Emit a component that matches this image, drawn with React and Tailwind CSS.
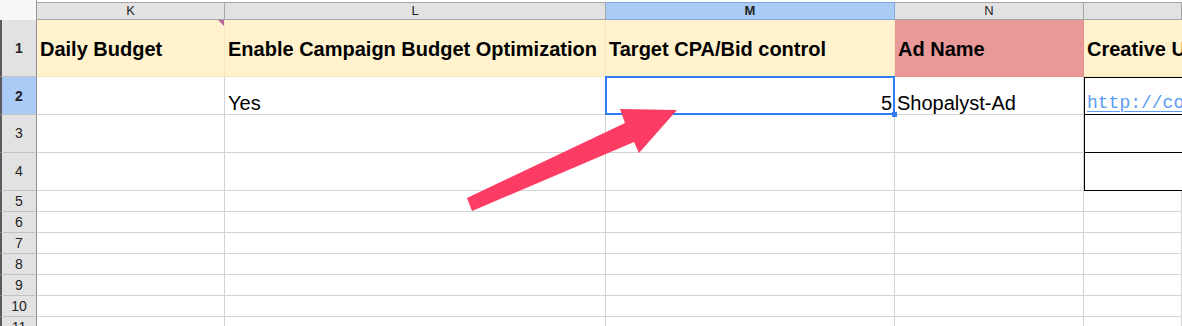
const grid = 'grid grid-cols-[37px_188px_381px_289px_189px_98px]'
const line = 'border-r border-b border-[#d3d3d3]'

const colHeads = [
  { label: 'K' },
  { label: 'L' },
  { label: 'M', active: true },
  { label: 'N' },
  { label: '' },
]

function RowHead({ n, h, active }) {
  return (
    <div
      className={`${h} flex items-center justify-center border-r border-r-[#8f8f8f] border-b border-b-[#c2c2c2] border-l-2 border-l-[#5a5a5a] text-[14px] text-[#222] ${
        active ? 'bg-[#a9cbf6] font-bold' : 'bg-[#e2e2e2]'
      }`}
    >
      {n}
    </div>
  )
}

function ColumnHeaders() {
  return (
    <div className={`${grid} h-[20px]`}>
      <div className="border-r border-[#9a9a9a] bg-[#f7f7f7]" />
      {colHeads.map((c, i) => (
        <div key={i} className="pt-[2px]">
          <div
            className={`flex h-[18px] items-center justify-center border-t border-b border-r text-[13px] text-[#222] ${
              c.active ? 'border-[#7fa9e0] bg-[#a9cbf6] font-bold' : 'border-[#a6a6a6] bg-[#e2e2e2]'
            }`}
          >
            {c.label}
          </div>
        </div>
      ))}
    </div>
  )
}

function EmptyRow({ n }) {
  return (
    <div className={`${grid} h-[21px]`}>
      <RowHead n={n} h="h-[21px]" />
      <div className={line} />
      <div className={line} />
      <div className={line} />
      <div className={line} />
      <div className={line} />
    </div>
  )
}

export default function App() {
  return (
    <div className="relative h-[326px] w-[1182px] overflow-hidden bg-white font-['Liberation_Sans',Arial,sans-serif] text-black">
      <ColumnHeaders />

      {/* row 1: headers */}
      <div className={`${grid} h-[57px] text-[20px] font-bold leading-[22px]`}>
        <RowHead n="1" h="h-[57px]" />
        <div className="relative flex items-center border-r border-b border-[#f3e6c1] bg-[#fff2cc] px-[3px] pt-[1px] whitespace-nowrap">
          Daily Budget
          <span className="absolute right-0 top-0 h-0 w-0 border-l-[6px] border-t-[6px] border-l-transparent border-t-[#b9649e]" />
        </div>
        <div className="flex items-center overflow-hidden border-r border-b border-[#f3e6c1] bg-[#fff2cc] px-[3px] pt-[1px] whitespace-nowrap">
          Enable Campaign Budget Optimization
        </div>
        <div className="flex items-center overflow-hidden border-r border-b border-[#f3e6c1] bg-[#fff2cc] px-[3px] pt-[1px] whitespace-nowrap">
          Target CPA/Bid control
        </div>
        <div className="flex items-center overflow-hidden border-r border-b border-[#e08e8e] bg-[#ea9999] px-[3px] pt-[1px] whitespace-nowrap">
          Ad Name
        </div>
        <div className="flex items-center overflow-hidden border-b border-[#f3e6c1] bg-[#fff2cc] px-[3px] pt-[1px] whitespace-nowrap">
          Creative URL
        </div>
      </div>

      {/* row 2 */}
      <div className={`${grid} h-[38px] text-[20px] leading-[22px]`}>
        <RowHead n="2" h="h-[38px]" active />
        <div className={line} />
        <div className={`${line} flex items-end px-[3px]`}>Yes</div>
        <div className={`${line} relative flex items-end justify-end pr-[2px]`}>
          5
          <div className="absolute -left-px -top-px -right-px -bottom-px border-2 border-[#2f7cf4]" />
          <div className="absolute -bottom-[3px] -right-[3px] h-[5px] w-[5px] bg-[#2f7cf4]" />
        </div>
        <div className={`${line} flex items-end overflow-hidden pl-[2px] whitespace-nowrap`}>Shopalyst-Ad</div>
        <div className="flex items-end overflow-hidden border-t border-l border-b border-black pl-[2px] whitespace-nowrap">
          <span className="font-['Liberation_Mono','Courier_New',monospace] text-[18px] text-[#5b9cf2] underline decoration-1 underline-offset-[3px]">
            http://content.shopalyst.com
          </span>
        </div>
      </div>

      {/* rows 3-4 */}
      {[3, 4].map((n) => (
        <div key={n} className={`${grid} h-[38px]`}>
          <RowHead n={n} h="h-[38px]" />
          <div className={line} />
          <div className={line} />
          <div className={line} />
          <div className={line} />
          <div className="border-l border-b border-black" />
        </div>
      ))}

      {[5, 6, 7, 8, 9, 10, 11].map((n) => (
        <EmptyRow key={n} n={n} />
      ))}

      {/* annotation arrow */}
      <svg className="pointer-events-none absolute left-0 top-0" width="1182" height="326" viewBox="0 0 1182 326">
        <polygon
          points="467,198 625,123 620,109 677,110 639,153 634,142 472,211"
          fill="#fd3c65"
        />
      </svg>
    </div>
  )
}
